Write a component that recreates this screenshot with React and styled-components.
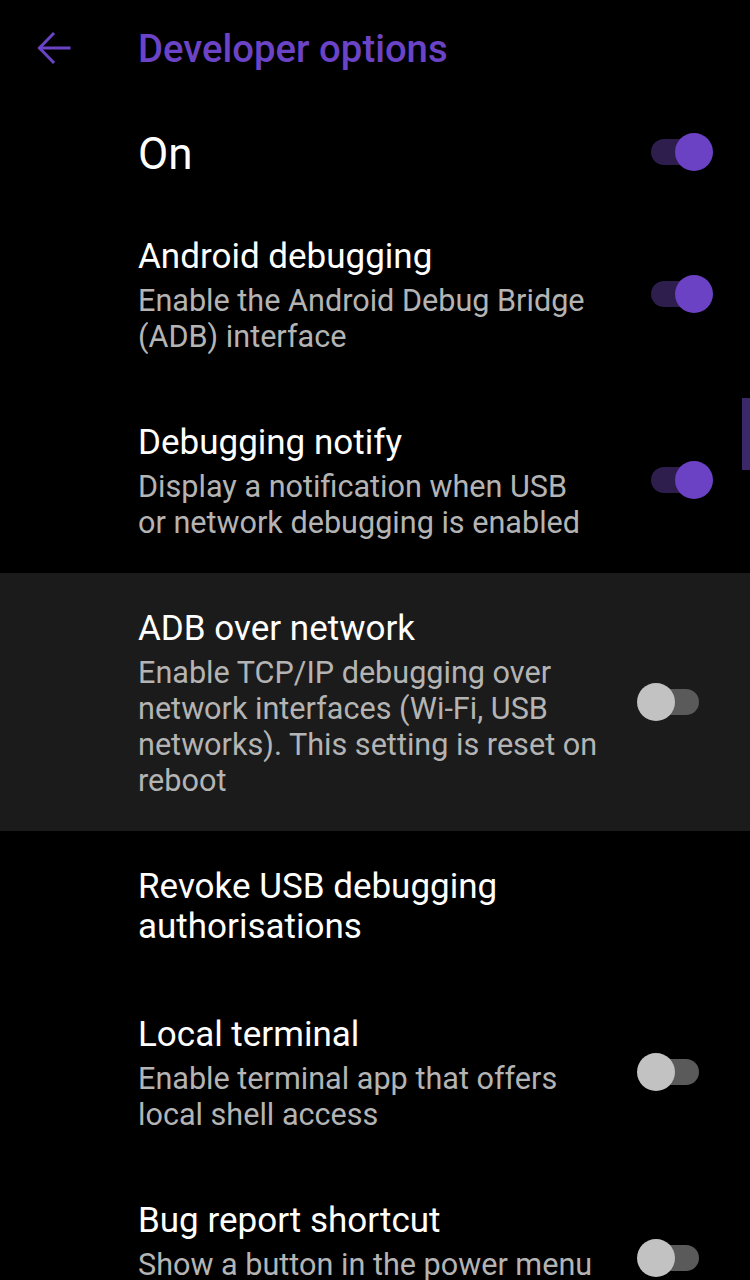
import React from 'react';
import styled, { createGlobalStyle } from 'styled-components';

const GlobalStyle = createGlobalStyle`
  html, body {
    margin: 0;
    padding: 0;
    background: #000;
    overflow: hidden;
  }
  body {
    font-family: Roboto, "Noto Sans", sans-serif;
    -webkit-font-smoothing: antialiased;
  }
`;

const Screen = styled.div`
  position: relative;
  width: 750px;
  height: 1280px;
  overflow: hidden;
  background: #000;
`;

const Header = styled.header`
  display: flex;
  align-items: center;
  height: 96px;
  padding-left: 36px;
  box-sizing: border-box;
  svg {
    width: 36px;
    height: 36px;
    margin-right: 66px;
  }
  h1 {
    margin: 0;
    font-size: 38.3px;
    font-weight: 500;
    color: #6b43c6;
  }
`;

const MasterRow = styled.div`
  display: flex;
  align-items: center;
  justify-content: space-between;
  height: 105px;
  padding: 10px 37px 0 138px;
  box-sizing: border-box;
  span {
    font-size: 44px;
    color: #fff;
  }
`;

const Row = styled.div`
  display: flex;
  align-items: center;
  padding: 36px 37px 32px 138px;
  background: ${({ $highlight }) => ($highlight ? '#1b1b1b' : 'transparent')};
`;

const Text = styled.div`
  width: 461px;
  flex: ${({ $wide }) => ($wide ? '1' : 'none')};
`;

const Title = styled.div`
  font-size: 35px;
  line-height: 40px;
  color: #fff;
`;

const Summary = styled.div`
  margin-top: 6px;
  font-size: 30.6px;
  line-height: 36px;
  color: #b4b4b4;
`;

const SwitchBox = styled.div`
  position: relative;
  flex: none;
  width: 76px;
  height: 38px;
  margin-left: auto;
  margin-top: -4px;
`;

const Track = styled.div`
  position: absolute;
  left: 14px;
  top: 6px;
  width: 48px;
  height: 26px;
  border-radius: 13px;
  background: ${({ $on }) => ($on ? '#2d1e4e' : '#5a5a5a')};
`;

const Thumb = styled.div`
  position: absolute;
  top: 0;
  left: ${({ $on }) => ($on ? '38px' : '0')};
  width: 38px;
  height: 38px;
  border-radius: 50%;
  background: ${({ $on }) => ($on ? '#6a42c3' : '#c2c2c2')};
`;

const ScrollThumb = styled.div`
  position: absolute;
  right: 0;
  top: 398px;
  width: 8px;
  height: 72px;
  background: #3a2868;
`;

function Switch({ on }) {
  return (
    <SwitchBox>
      <Track $on={on} />
      <Thumb $on={on} />
    </SwitchBox>
  );
}

const items = [
  {
    title: 'Android debugging',
    summary: 'Enable the Android Debug Bridge (ADB) interface',
    toggle: true,
  },
  {
    title: 'Debugging notify',
    summary: 'Display a notification when USB or network debugging is enabled',
    toggle: true,
  },
  {
    title: 'ADB over network',
    summary:
      'Enable TCP/IP debugging over network interfaces (Wi-Fi, USB networks). This setting is reset on reboot',
    toggle: false,
    highlight: true,
  },
  {
    title: 'Revoke USB debugging authorisations',
  },
  {
    title: 'Local terminal',
    summary: 'Enable terminal app that offers local shell access',
    toggle: false,
  },
  {
    title: 'Bug report shortcut',
    summary: 'Show a button in the power menu for taking a bug report',
    toggle: false,
  },
];

export default function App() {
  return (
    <Screen>
      <GlobalStyle />
      <Header>
        <svg viewBox="0 0 36 36" fill="none" stroke="#6b43c6" strokeWidth="3" strokeLinecap="square">
          <path d="M33 18H4" />
          <path d="M17 4L3.5 18L17 32" />
        </svg>
        <h1>Developer options</h1>
      </Header>
      <MasterRow>
        <span>On</span>
        <Switch on />
      </MasterRow>
      {items.map((item) => (
        <Row key={item.title} $highlight={item.highlight}>
          <Text $wide={item.toggle === undefined}>
            <Title>{item.title}</Title>
            {item.summary && <Summary>{item.summary}</Summary>}
          </Text>
          {item.toggle !== undefined && <Switch on={item.toggle} />}
        </Row>
      ))}
      <ScrollThumb />
    </Screen>
  );
}
